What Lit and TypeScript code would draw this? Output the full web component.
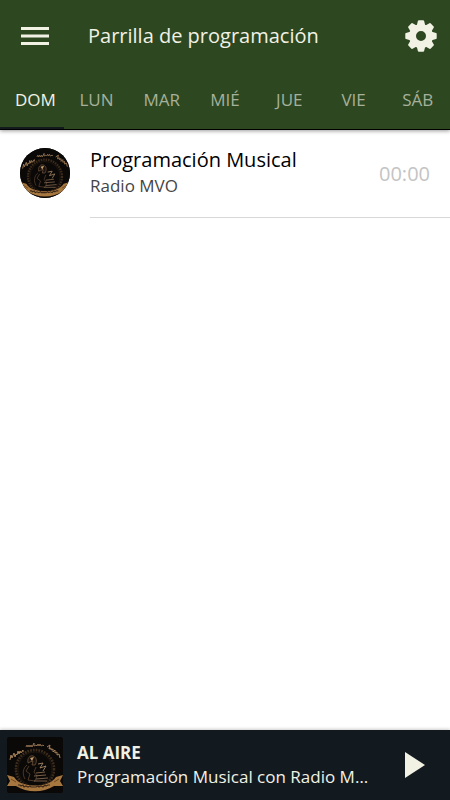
import { LitElement, html, svg, css } from "lit";
import { customElement, state } from "lit/decorators.js";

@customElement("station-logo")
class StationLogo extends LitElement {
  static styles = css`
    :host { display: block; overflow: hidden; background: #0b0808; }
    .art { display: block; width: 100%; height: 100%; }
  `;
  render() {
    return html`
      <svg class="art" viewBox="0 0 56 56" fill="none" aria-hidden="true">
        <rect width="56" height="56" fill="#0b0808" />
        <circle cx="28" cy="32" r="19" stroke="#3c2c1c" stroke-width="2.6" stroke-dasharray="1.8 1" />
        <circle cx="28" cy="32" r="17" stroke="#2a1f15" stroke-width="0.7" />
        <path d="M3 23l1-5 1 3 2-5 1 4 1-3 1 1 1-4 1 3 1-3 1 2 2-3 0 2" stroke="#a58058" stroke-width="1" />
        <path d="M19 10l1-2 1 2 1-2 1 2 1-2 1 2 2-4 0 3 2-1 1 1 1-2 1 2 1-2 1 2 2-1 1 1" stroke="#8f7150" stroke-width="1" />
        <path d="M40 10l3-2-1 4 2-1 0 2 2-1 0 3 2-2 0 3 2-1 0 3 2-1 1 4" stroke="#a58058" stroke-width="1" />
        <path d="M21 26c-1-5 2-8 5-7 4 1 4 6 2 9l-3 0 1-4-3 1z" stroke="#70553b" stroke-width="0.8" fill="#19120e" />
        <path d="M23 21l4-1-2 4z" fill="#c79e6d" />
        <path d="M20 28c-4 3-5 9-2 14M22 29l-3 5 4 3-2 6 7 1 2-5-3-4 2-5" stroke="#5c4431" stroke-width="0.8" />
        <path d="M31 27l5-1-3 5 6-2-3 5" stroke="#b4946f" stroke-width="0.8" />
        <path d="M29 36l9-1M27 39l12-1M29 42l12-1M27 44l13 0" stroke="#927356" stroke-width="0.8" />
        <path d="M0 38l7 2c2 3 5 6 10 7 8 2 15 2 22 0 4-1 8-4 10-7l7-2-3 6 3 5-9 0c-11 7-27 7-38 0l-9 0 3-5z" fill="#a77740" />
        <path d="M4 42l5 3M52 42l-5 3" stroke="#70491f" stroke-width="1" />
        <path d="M11 48l2 0 1 1 2-1 1 2 2-1 2 1 2-1 1 1 2 0 3 0 2-1 1 1 2-1 2 1 2-2 1 1 2-1 2 0" stroke="#3d2918" stroke-width="1.2" />
      </svg>`;
  }
}

@customElement("app-root")
class AppRoot extends LitElement {
  @state() private day = "DOM";

  private days = ["DOM", "LUN", "MAR", "MIÉ", "JUE", "VIE", "SÁB"];

  static styles = css`
    :host {
      display: flex;
      flex-direction: column;
      min-height: 100vh;
      background: #fff;
      font-family: "Open Sans", "Noto Sans", sans-serif;
      color: #000;
    }
    button {
      border: 0;
      padding: 0;
      background: none;
      font: inherit;
      color: inherit;
      cursor: pointer;
    }
    .header {
      background: #2d4821;
      color: #f1f1e4;
      border-bottom: 1px solid #000;
      box-shadow: 0 1px 4px rgba(0, 0, 0, 0.4);
    }
    .toolbar { display: flex; align-items: center; height: 72px; }
    .icon-button {
      flex: none;
      display: flex;
      align-items: center;
      justify-content: center;
      width: 70px;
      height: 72px;
    }
    .settings { width: 58px; }
    .icon { display: block; fill: #f1f1e4; }
    .title {
      flex: 1;
      margin: 0;
      padding-left: 18px;
      font-size: 20px;
      line-height: 28px;
      font-weight: 400;
    }
    .tabs { display: flex; height: 57px; }
    .tab {
      flex: 1 1 0;
      min-width: 0;
      padding: 0 15px;
      border-bottom: 2px solid transparent;
      font-size: 17px;
      line-height: 24px;
      font-weight: 400;
      text-align: center;
      white-space: nowrap;
      color: #a6b09b;
    }
    .tab.active { color: #f1f1e4; border-bottom-color: #121a20; }
    .list { flex: 1; margin: 0; padding: 0; list-style: none; }
    .item { display: flex; }
    .avatar { flex: none; width: 50px; height: 50px; margin: 18px 20px; border-radius: 50%; }
    .row {
      flex: 1;
      display: flex;
      align-items: center;
      height: 87px;
      padding-right: 20px;
      border-bottom: 1px solid #d8d8d8;
    }
    .info { flex: 1; min-width: 0; padding-bottom: 3px; }
    .name { margin: 0; font-size: 20px; line-height: 28px; font-weight: 400; }
    .host { margin: 0; font-size: 17px; line-height: 24px; font-weight: 400; color: #444; }
    .time { font-size: 20px; line-height: 28px; color: #c4c4c4; }
    .player {
      display: flex;
      align-items: center;
      height: 70px;
      padding-left: 7px;
      background: #121a20;
      color: #f1f1e4;
      box-shadow: 0 -1px 3px rgba(0, 0, 0, 0.2);
    }
    .cover { flex: none; width: 56px; height: 56px; border-radius: 3px; }
    .now { flex: 1; min-width: 0; padding: 0 4px 0 14px; }
    .live { margin: 0; font-size: 17px; line-height: 24px; font-weight: 700; }
    .track {
      margin: 0;
      font-size: 17px;
      line-height: 24px;
      overflow: hidden;
      text-overflow: ellipsis;
      white-space: nowrap;
    }
    .play { width: 70px; height: 70px; }
  `;

  render() {
    return html`
      <header class="header">
        <div class="toolbar">
          <button class="icon-button" aria-label="Menú">
            <svg class="icon" width="28" height="20" viewBox="0 0 28 20">
              <path d="M0 1h28v3H0zM0 8.500h28v3H0zM0 16h28v3H0z" />
            </svg>
          </button>
          <h1 class="title">Parrilla de programación</h1>
          <button class="icon-button settings" aria-label="Ajustes">
            <svg class="icon" width="32" height="32" viewBox="-16 -16 32 32">
              <circle r="8.500" fill="none" stroke="#f1f1e4" stroke-width="7" />
              ${[0, 45, 90, 135, 180, 225, 270, 315].map(
                (a) => svg`<path transform="rotate(${a})" d="M-4.400 -10L-3.100 -15Q-2.900 -15.700 -2.200 -15.700H2.200Q2.900 -15.700 3.100 -15L4.400 -10z" />`
              )}
            </svg>
          </button>
        </div>
        <nav class="tabs" role="tablist">
          ${this.days.map(
            (d) => html`<button
              class="tab ${d === this.day ? "active" : ""}"
              role="tab"
              aria-selected=${d === this.day}
              @click=${() => (this.day = d)}
            >${d}</button>`
          )}
        </nav>
      </header>
      <ul class="list">
        <li class="item">
          <station-logo class="avatar"></station-logo>
          <div class="row">
            <div class="info">
              <h2 class="name">Programación Musical</h2>
              <p class="host">Radio MVO</p>
            </div>
            <time class="time">00:00</time>
          </div>
        </li>
      </ul>
      <footer class="player">
        <station-logo class="cover"></station-logo>
        <div class="now">
          <p class="live">AL AIRE</p>
          <p class="track">Programación Musical con Radio MVO</p>
        </div>
        <button class="icon-button play" aria-label="Reproducir">
          <svg class="icon" width="20" height="26" viewBox="0 0 20 26"><path d="M0 0l20 13L0 26z" /></svg>
        </button>
      </footer>
    `;
  }
}
